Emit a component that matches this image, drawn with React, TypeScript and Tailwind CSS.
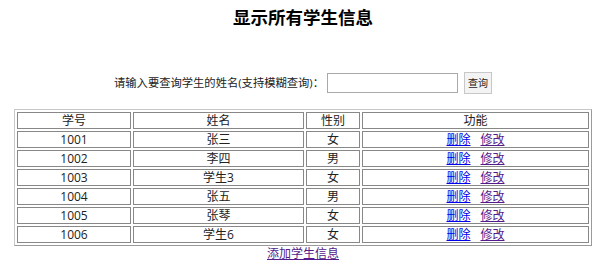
import React from 'react';

const students = [
  { id: '1001', name: '张三', sex: '女' },
  { id: '1002', name: '李四', sex: '男' },
  { id: '1003', name: '学生3', sex: '女' },
  { id: '1004', name: '张五', sex: '男' },
  { id: '1005', name: '张琴', sex: '女' },
  { id: '1006', name: '学生6', sex: '女' },
];

const font = { fontFamily: '"Open Sans", "Noto Sans CJK SC", sans-serif' };

const cell = 'border border-[#888] p-0 h-[17px] leading-[15px] text-center font-normal';

const App = () => {
  return (
    <div className="w-[606px] h-[268px] bg-white text-[#222] text-[12px]" style={font}>
      <h1 className="pt-[7px] text-center text-[17.5px] leading-[20px] font-bold text-black">显示所有学生信息</h1>

      {/* search bar */}
      <div className="mt-[45px] flex items-center justify-center h-[22px]">
        <span className="text-[11.3px] leading-[22px]">请输入要查询学生的姓名(支持模糊查询)：</span>
        <input
          type="text"
          className="ml-[3px] w-[131px] h-[20px] border border-[#a9a9a9] bg-white outline-none"
        />
        <button className="ml-[6px] w-[28px] h-[22px] border border-[#c8c8c8] bg-[#f3f3f3] text-[10px] leading-[20px]">
          查询
        </button>
      </div>

      <table className="mt-[15px] mx-auto w-[578px] table-fixed border-separate border-spacing-[2px] border border-t-[#c8c8c8] border-l-[#c8c8c8] border-r-[#9a9a9a] border-b-[#9a9a9a]">
        <thead>
          <tr>
            <th className={`${cell} w-[114px]`}>学号</th>
            <th className={`${cell} w-[171px]`}>姓名</th>
            <th className={`${cell} w-[54px]`}>性别</th>
            <th className={cell}>功能</th>
          </tr>
        </thead>
        <tbody>
          {students.map((s) => (
            <tr key={s.id}>
              <td className={cell}>{s.id}</td>
              <td className={cell}>{s.name}</td>
              <td className={cell}>{s.sex}</td>
              <td className={cell}>
                <a href="#" className="text-[#0000ee] underline">删除</a>
                <span className="inline-block w-[10px]" />
                <a href="#" className="text-[#551a8b] underline">修改</a>
              </td>
            </tr>
          ))}
        </tbody>
      </table>

      <div className="text-center leading-[16px]">
        <a href="#" className="text-[#551a8b] underline">添加学生信息</a>
      </div>
    </div>
  );
};

export default App;
